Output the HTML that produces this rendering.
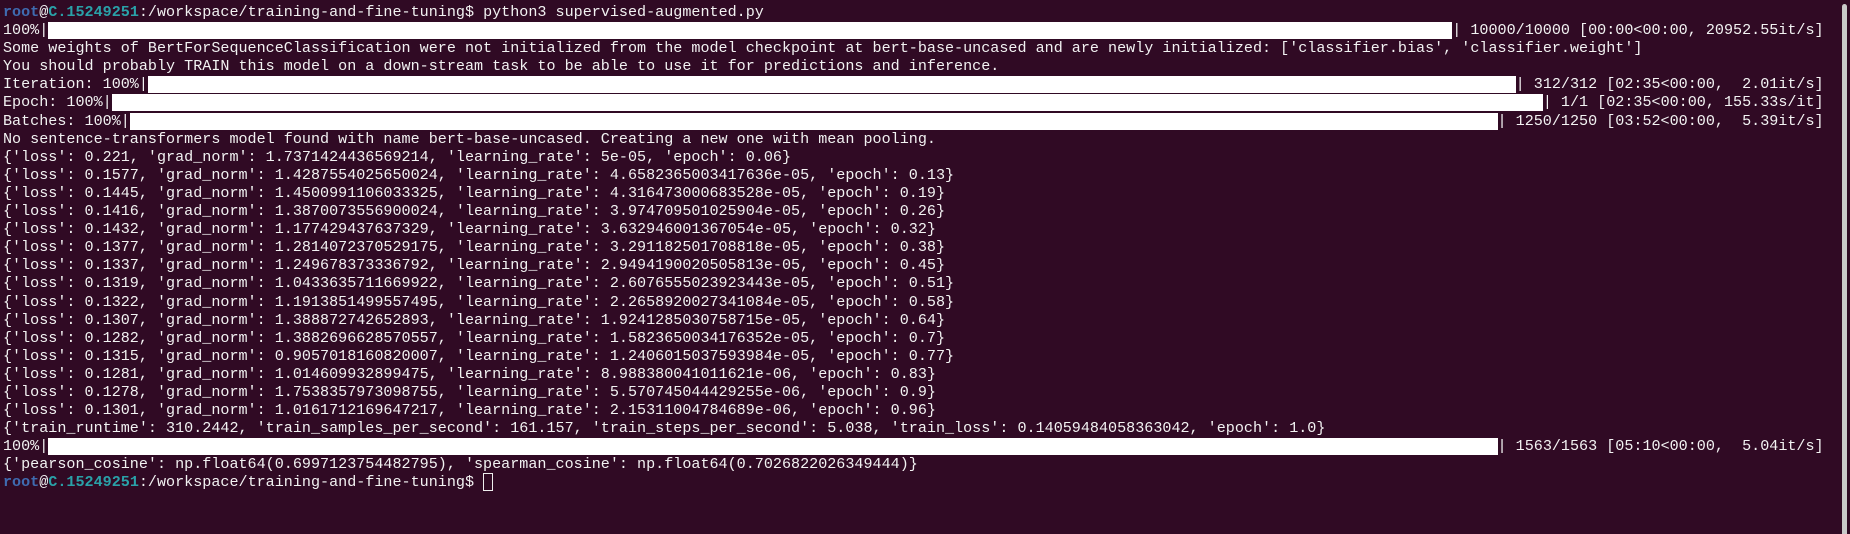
<!DOCTYPE html>
<html><head><meta charset="utf-8"><style>
html,body{margin:0;padding:0;background:#300a24;width:1850px;height:534px;overflow:hidden}
pre{margin:0;padding:3px 0 0 3px;font-family:"Liberation Mono",monospace;font-size:15.1px;line-height:18.1px;color:#f2f2f2;white-space:pre}
.b{display:inline-block;background:#fff;height:17px;vertical-align:top;margin-top:1px}
.u{color:#3f6bb0;font-weight:bold}.c{color:#2aa1a8;font-weight:bold}
.cur{display:inline-block;border:1px solid #eee;vertical-align:top;margin-top:0px;box-sizing:border-box;width:10px;height:18px}
.sb{position:absolute;left:1842px;top:4px;width:5px;height:530px;background:#c9c9c9;border-radius:3px 3px 0 0}
</style></head><body>
<pre><span class="u">root</span>@<span class="c">C.15249251</span>:/workspace/training-and-fine-tuning$ python3 supervised-augmented.py
100%|<span class="b" style="width:155ch"></span>| 10000/10000 [00:00&lt;00:00, 20952.55it/s]
Some weights of BertForSequenceClassification were not initialized from the model checkpoint at bert-base-uncased and are newly initialized: ['classifier.bias', 'classifier.weight']
You should probably TRAIN this model on a down-stream task to be able to use it for predictions and inference.
Iteration: 100%|<span class="b" style="width:151ch"></span>| 312/312 [02:35&lt;00:00,  2.01it/s]
Epoch: 100%|<span class="b" style="width:158ch"></span>| 1/1 [02:35&lt;00:00, 155.33s/it]
Batches: 100%|<span class="b" style="width:151ch"></span>| 1250/1250 [03:52&lt;00:00,  5.39it/s]
No sentence-transformers model found with name bert-base-uncased. Creating a new one with mean pooling.
{'loss': 0.221, 'grad_norm': 1.7371424436569214, 'learning_rate': 5e-05, 'epoch': 0.06}
{'loss': 0.1577, 'grad_norm': 1.4287554025650024, 'learning_rate': 4.6582365003417636e-05, 'epoch': 0.13}
{'loss': 0.1445, 'grad_norm': 1.4500991106033325, 'learning_rate': 4.316473000683528e-05, 'epoch': 0.19}
{'loss': 0.1416, 'grad_norm': 1.3870073556900024, 'learning_rate': 3.974709501025904e-05, 'epoch': 0.26}
{'loss': 0.1432, 'grad_norm': 1.177429437637329, 'learning_rate': 3.632946001367054e-05, 'epoch': 0.32}
{'loss': 0.1377, 'grad_norm': 1.2814072370529175, 'learning_rate': 3.291182501708818e-05, 'epoch': 0.38}
{'loss': 0.1337, 'grad_norm': 1.249678373336792, 'learning_rate': 2.9494190020505813e-05, 'epoch': 0.45}
{'loss': 0.1319, 'grad_norm': 1.0433635711669922, 'learning_rate': 2.6076555023923443e-05, 'epoch': 0.51}
{'loss': 0.1322, 'grad_norm': 1.1913851499557495, 'learning_rate': 2.2658920027341084e-05, 'epoch': 0.58}
{'loss': 0.1307, 'grad_norm': 1.388872742652893, 'learning_rate': 1.9241285030758715e-05, 'epoch': 0.64}
{'loss': 0.1282, 'grad_norm': 1.3882696628570557, 'learning_rate': 1.5823650034176352e-05, 'epoch': 0.7}
{'loss': 0.1315, 'grad_norm': 0.9057018160820007, 'learning_rate': 1.2406015037593984e-05, 'epoch': 0.77}
{'loss': 0.1281, 'grad_norm': 1.014609932899475, 'learning_rate': 8.988380041011621e-06, 'epoch': 0.83}
{'loss': 0.1278, 'grad_norm': 1.7538357973098755, 'learning_rate': 5.570745044429255e-06, 'epoch': 0.9}
{'loss': 0.1301, 'grad_norm': 1.0161712169647217, 'learning_rate': 2.15311004784689e-06, 'epoch': 0.96}
{'train_runtime': 310.2442, 'train_samples_per_second': 161.157, 'train_steps_per_second': 5.038, 'train_loss': 0.14059484058363042, 'epoch': 1.0}
100%|<span class="b" style="width:160ch"></span>| 1563/1563 [05:10&lt;00:00,  5.04it/s]
{'pearson_cosine': np.float64(0.6997123754482795), 'spearman_cosine': np.float64(0.7026822026349444)}
<span class="u">root</span>@<span class="c">C.15249251</span>:/workspace/training-and-fine-tuning$ <span class="cur"></span></pre>
<div class="sb"></div>
</body></html>
